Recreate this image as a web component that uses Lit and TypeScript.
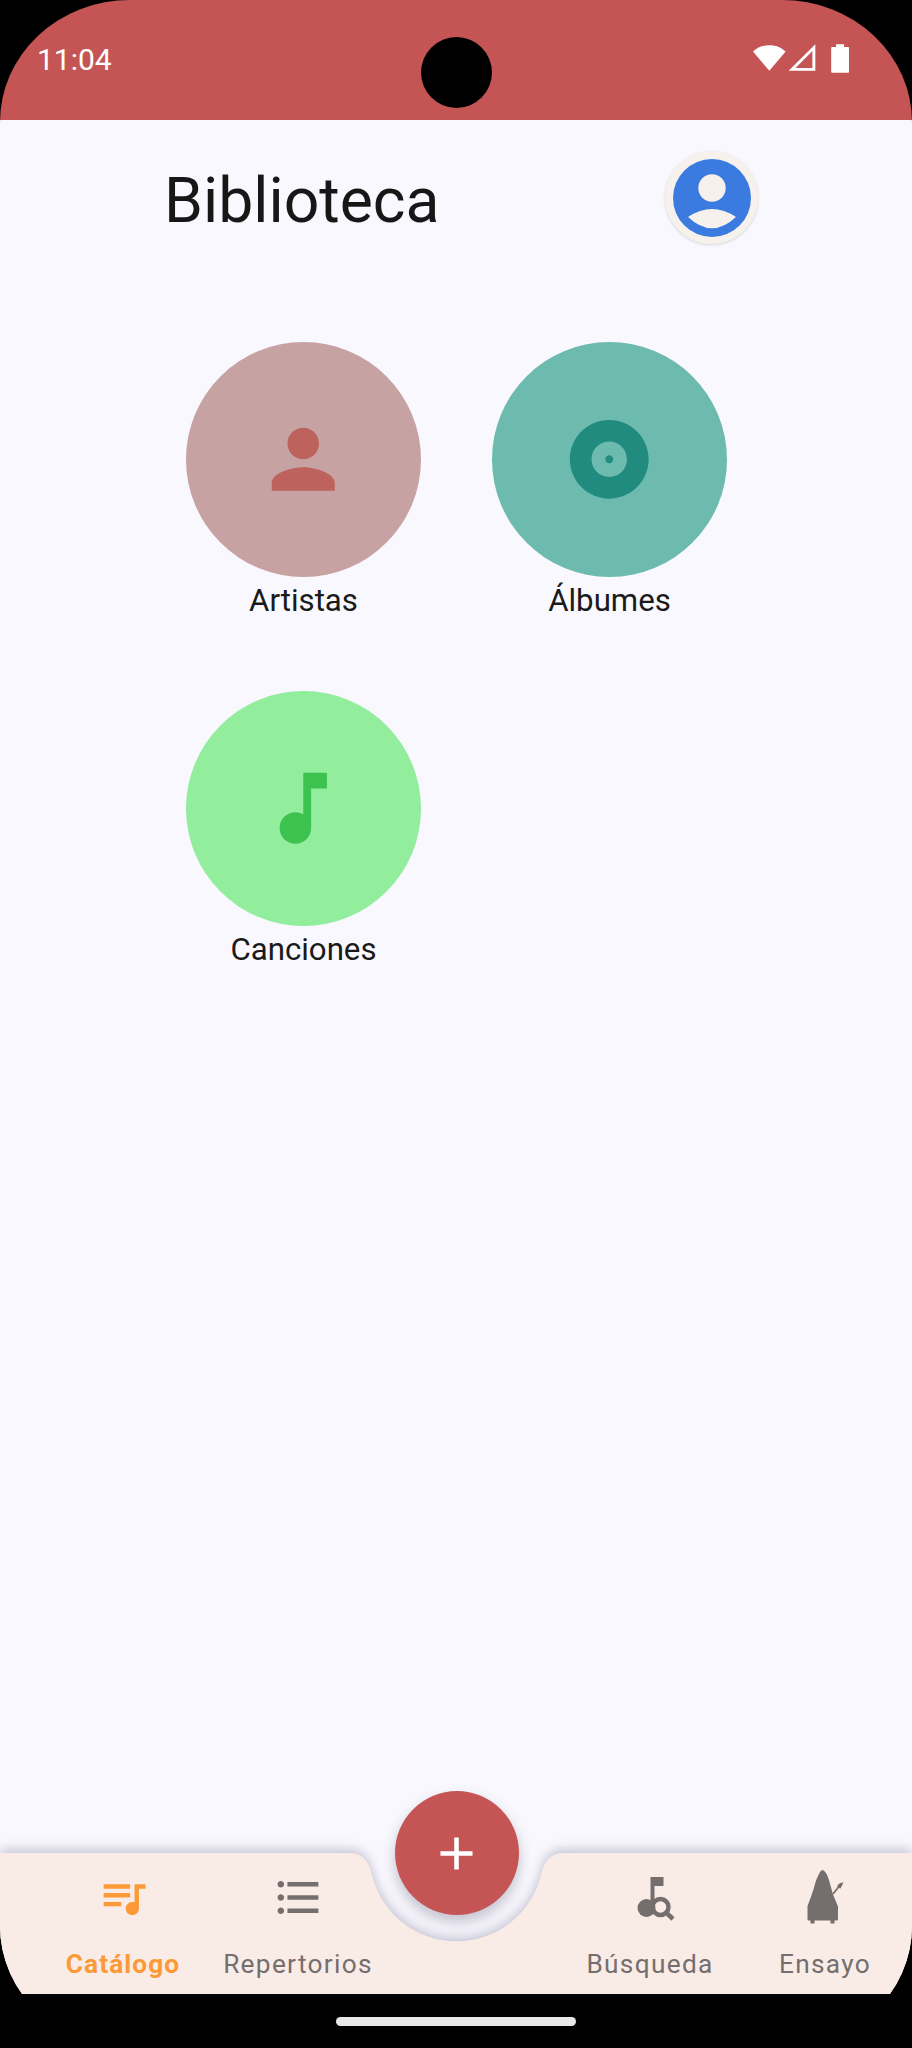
import { LitElement, html, css, svg } from 'lit';
import { customElement } from 'lit/decorators.js';

const PERSON = 'M12 12c2.21 0 4-1.79 4-4s-1.79-4-4-4-4 1.79-4 4 1.79 4 4 4zm0 2c-2.67 0-8 1.34-8 4v2h16v-2c0-2.66-5.33-4-8-4z';
const ALBUM = 'M12 2C6.48 2 2 6.48 2 12s4.48 10 10 10 10-4.48 10-10S17.52 2 12 2zm0 14.5c-2.49 0-4.5-2.01-4.5-4.5S9.51 7.5 12 7.5s4.5 2.01 4.5 4.5-2.01 4.5-4.5 4.5zm0-5.5c-.55 0-1 .45-1 1s.45 1 1 1 1-.45 1-1-.45-1-1-1z';
const NOTE = 'M12 3v10.55c-.59-.34-1.27-.55-2-.55-2.21 0-4 1.79-4 4s1.79 4 4 4 4-1.79 4-4V7h4V3h-6z';
const QUEUE = 'M15 6H3v2h12V6zm0 4H3v2h12v-2zM3 16h8v-2H3v2zM17 6v8.18c-.31-.11-.65-.18-1-.18-1.66 0-3 1.34-3 3s1.34 3 3 3 3-1.34 3-3V8h3V6h-5z';
const LIST = 'M4 10.5c-.83 0-1.5.67-1.5 1.5s.67 1.5 1.5 1.5 1.5-.67 1.5-1.5-.67-1.5-1.5-1.5zm0-6c-.83 0-1.5.67-1.5 1.5S3.17 7.5 4 7.5 5.5 6.83 5.5 6 4.83 4.5 4 4.5zm0 12c-.83 0-1.5.68-1.5 1.5s.68 1.5 1.5 1.5 1.5-.68 1.5-1.5-.67-1.5-1.5-1.5zM7 19h14v-2H7v2zm0-6h14v-2H7v2zm0-8v2h14V5H7z';

const icon24 = (d: string) => html`<svg viewBox="0 0 24 24"><path d=${d} fill="currentColor"></path></svg>`;

// these two are custom glyphs, drawn on a 53 box
const noteSearch = html`<svg viewBox="0 0 53 53">
  <path fill="currentColor" d="M26.500 6h13v9h-9v19h-4z"></path>
  <circle cx="22.500" cy="37" r="9" fill="currentColor"></circle>
  <circle cx="36.500" cy="36" r="8" fill="none" stroke="currentColor" stroke-width="4.500"></circle>
  <path d="M42 41.500l7 6.500" stroke="currentColor" stroke-width="4.500" fill="none"></path>
</svg>`;

const metronome = html`<svg viewBox="0 0 53 53">
  <path fill="currentColor" d="M23.500 -1c1.500 0 3.500 2.500 5 6 2 5 3.500 11 5 17 2 5 4 9.500 5.500 13.500v13c0 .5-.5 1-1 1h-28.500c-.5 0-1-.5-1-1v-13.500c2-5 4-11 6-16.500 1.500-6 3-11 5-14.500 1-2.500 2.500-5 4-5z"></path>
  <path fill="currentColor" d="M11.500 49h4v3.500h-4zM31.500 49h4v3.500h-4z"></path>
  <path d="M34 23l6-7.500" stroke="currentColor" stroke-width="1.800" fill="none"></path>
  <path fill="currentColor" d="M38.500 14.500l2.500-2.500 3.500-.5-1.500 3-1.500 3-3-1z"></path>
</svg>`;

const tiles = [
  { label: 'Artistas', bg: '#c6a2a2', fg: '#be625e', d: PERSON },
  { label: 'Álbumes', bg: '#6dbaae', fg: '#218b80', d: ALBUM },
  { label: 'Canciones', bg: '#92ed9c', fg: '#3dc24f', d: NOTE },
];

@customElement('app-root')
export class AppRoot extends LitElement {
  static styles = css`
    :host {
      display: block;
      height: 2048px;
      background: #000;
      font-family: Roboto, sans-serif;
    }

    .screen {
      position: relative;
      display: flex;
      flex-direction: column;
      height: 2048px;
      border-radius: 130px / 122px;
      overflow: hidden;
    }

    .status {
      flex: none;
      display: flex;
      align-items: center;
      justify-content: space-between;
      height: 120px;
      box-sizing: border-box;
      padding: 0 63px 2px 37px;
      background: #c55555;
      color: #fff;
      font-size: 30px;
    }

    .status-icons {
      display: block;
      width: 96px;
      height: 30px;
      margin-top: -2px;
    }

    .camera {
      position: absolute;
      left: 420.500px;
      top: 37px;
      width: 71px;
      height: 71px;
      border-radius: 50%;
      background: #000;
    }

    main {
      flex: 1;
      min-height: 0;
      background: #f9f8fe;
    }

    .head {
      display: flex;
      align-items: flex-start;
      justify-content: space-between;
      padding: 31px 154px 0 164px;
    }

    h1 {
      margin: 0;
      padding-top: 6px;
      font-size: 62.500px;
      font-weight: 400;
      line-height: 87px;
      color: #171717;
    }

    .avatar {
      display: flex;
      align-items: center;
      justify-content: center;
      width: 93px;
      height: 93px;
      border-radius: 50%;
      background: #f7f1ee;
      box-shadow: 0 1px 3px rgba(0, 0, 0, 0.14);
    }

    .avatar svg {
      display: block;
      width: 78px;
      height: 78px;
    }

    .grid {
      display: grid;
      grid-template-columns: 235px 235px;
      column-gap: 71px;
      row-gap: 66px;
      padding: 98px 0 0 186px;
    }

    .tile {
      display: flex;
      flex-direction: column;
      align-items: center;
    }

    .disc {
      display: flex;
      align-items: center;
      justify-content: center;
      width: 235px;
      height: 235px;
      border-radius: 50%;
    }

    .disc svg {
      display: block;
      width: 94.500px;
      height: 94.500px;
    }

    .tile span {
      font-size: 31.200px;
      line-height: 48px;
      color: #1a1a1a;
    }

    nav {
      position: relative;
      flex: none;
      height: 141px;
      background: #f9f8fe;
    }

    .bar {
      position: absolute;
      left: 0;
      top: 0;
      width: 912px;
      height: 141px;
      overflow: visible;
      filter: drop-shadow(0 -3px 6px rgba(60, 60, 100, 0.3));
    }

    .items {
      position: relative;
      display: grid;
      grid-template-columns: 175px 175px 177px 175px 175px;
      padding: 18px 0 0 35.500px;
    }

    .item {
      display: flex;
      flex-direction: column;
      align-items: center;
      color: #756e6e;
      font-size: 26.250px;
      letter-spacing: 1.300px;
      white-space: nowrap;
    }

    .item.active {
      color: #fb9a36;
      font-weight: 700;
      letter-spacing: 1.100px;
    }

    .item svg {
      display: block;
      width: 53px;
      height: 53px;
      overflow: visible;
    }

    .item span {
      margin-top: 23px;
      line-height: 34px;
    }

    .fab {
      position: absolute;
      left: 394.500px;
      top: -62px;
      display: flex;
      align-items: center;
      justify-content: center;
      width: 124px;
      height: 124px;
      border-radius: 50%;
      background: #c55555;
      color: #fff;
      box-shadow: 0 7px 14px rgba(50, 50, 80, 0.28);
    }

    .fab svg {
      display: block;
      width: 55px;
      height: 55px;
    }

    .home {
      flex: none;
      display: flex;
      align-items: flex-start;
      justify-content: center;
      height: 54px;
      box-sizing: border-box;
      padding-top: 23px;
      background: #000;
    }

    .home i {
      display: block;
      width: 240px;
      height: 9px;
      border-radius: 5px;
      background: #e8e8e8;
    }
  `;

  renderStatusIcons() {
    return svg`
      <path fill="#fff" d="M16.500 28L0 8.500C4.500 4 10 2 16.500 2S28.500 4 33 8.500z"></path>
      <path fill="#fff" fill-rule="evenodd" d="M36 28L63 1v27zM43 25h17V8z"></path>
      <path fill="#fff" d="M79 5c0-.6.4-1 1-1h4V1h8v3h4c.6 0 1 .4 1 1v24c0 .6-.4 1-1 1H80c-.6 0-1-.4-1-1z"></path>
    `;
  }

  render() {
    return html`
      <div class="screen">
        <header class="status">
          <span>11:04</span>
          <svg class="status-icons" viewBox="0 0 97 30">${this.renderStatusIcons()}</svg>
        </header>
        <div class="camera"></div>

        <main>
          <div class="head">
            <h1>Biblioteca</h1>
            <div class="avatar">
              <svg viewBox="0 0 78 78">
                <circle cx="39" cy="39" r="39" fill="#3b7be0"></circle>
                <circle cx="39" cy="29" r="13.700" fill="#f7f1ee"></circle>
                <path fill="#f7f1ee" d="M15 58Q39 42 63 58Q39 80.500 15 58z"></path>
              </svg>
            </div>
          </div>
          <div class="grid">
            ${tiles.map(
              (t) => html`
                <div class="tile">
                  <div class="disc" style="background:${t.bg};color:${t.fg}">${icon24(t.d)}</div>
                  <span>${t.label}</span>
                </div>
              `
            )}
          </div>
        </main>

        <nav>
          <svg class="bar" viewBox="0 0 912 141">
            <path
              fill="#f9ece7"
              d="M0 0H350C362 0 369 8 372 22A87 87 0 0 0 541 22C544 8 551 0 563 0H912V141H0z"
            ></path>
          </svg>
          <div class="items">
            <div class="item active">${icon24(QUEUE)}<span>Catálogo</span></div>
            <div class="item">${icon24(LIST)}<span>Repertorios</span></div>
            <div></div>
            <div class="item">${noteSearch}<span>Búsqueda</span></div>
            <div class="item">${metronome}<span>Ensayo</span></div>
          </div>
          <div class="fab">
            <svg viewBox="0 0 24 24"><path fill="currentColor" d="M19 13h-6v6h-2v-6H5v-2h6V5h2v6h6v2z"></path></svg>
          </div>
        </nav>

        <div class="home"><i></i></div>
      </div>
    `;
  }
}
